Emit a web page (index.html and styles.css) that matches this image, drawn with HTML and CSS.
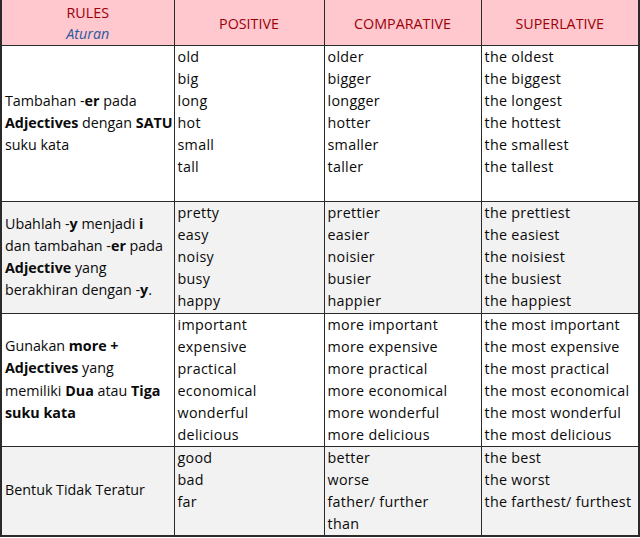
FILE: index.html
```html
<!DOCTYPE html>
<html>
<head>
<meta charset="utf-8">
<link rel="stylesheet" href="styles.css">
</head>
<body>
<table class="grid">
  <colgroup>
    <col class="c-rule"><col class="c-pos"><col class="c-comp"><col class="c-sup">
  </colgroup>
  <thead>
    <tr class="head">
      <th class="rule-head"><span class="rules">RULES</span><span class="aturan">Aturan</span></th>
      <th>POSITIVE</th>
      <th>COMPARATIVE</th>
      <th>SUPERLATIVE</th>
    </tr>
  </thead>
  <tbody>
    <tr class="r1">
      <td class="rule">Tambahan -<b>er</b> pada<br><b>Adjectives</b> dengan <b>SATU</b><br>suku kata</td>
      <td class="words">old<br>big<br>long<br>hot<br>small<br>tall</td>
      <td class="words">older<br>bigger<br>longger<br>hotter<br>smaller<br>taller</td>
      <td class="words">the oldest<br>the biggest<br>the longest<br>the hottest<br>the smallest<br>the tallest</td>
    </tr>
    <tr class="r2 shade">
      <td class="rule">Ubahlah -<b>y</b> menjadi <b>i</b><br>dan tambahan -<b>er</b> pada<br><b>Adjective</b> yang<br>berakhiran dengan -<b>y</b>.</td>
      <td class="words">pretty<br>easy<br>noisy<br>busy<br>happy</td>
      <td class="words">prettier<br>easier<br>noisier<br>busier<br>happier</td>
      <td class="words">the prettiest<br>the easiest<br>the noisiest<br>the busiest<br>the happiest</td>
    </tr>
    <tr class="r3">
      <td class="rule">Gunakan <b>more +</b><br><b>Adjectives</b> yang<br>memiliki <b>Dua</b> atau <b>Tiga</b><br><b>suku kata</b></td>
      <td class="words">important<br>expensive<br>practical<br>economical<br>wonderful<br>delicious</td>
      <td class="words">more important<br>more expensive<br>more practical<br>more economical<br>more wonderful<br>more delicious</td>
      <td class="words">the most important<br>the most expensive<br>the most practical<br>the most economical<br>the most wonderful<br>the most delicious</td>
    </tr>
    <tr class="r4 shade">
      <td class="rule">Bentuk Tidak Teratur</td>
      <td class="words">good<br>bad<br>far</td>
      <td class="words">better<br>worse<br>father/ further<br>than</td>
      <td class="words">the best<br>the worst<br>the farthest/ furthest</td>
    </tr>
  </tbody>
</table>
</body>
</html>
```

FILE: styles.css
```css
html, body {
  margin: 0;
  padding: 0;
  background: #ffffff;
}
body {
  font-family: "Open Sans", "Liberation Sans", sans-serif;
  font-size: 14.3px;
  color: #0a0a0a;
}
.grid {
  border-collapse: collapse;
  table-layout: fixed;
  width: 638px;
}
.c-rule { width: 173px; }
.c-pos { width: 150px; }
.c-comp { width: 157px; }
.c-sup { width: 158px; }
.grid td, .grid th {
  border: 1px solid #2a2a2a;
  padding: 0 0 0 3px;
  white-space: nowrap;
  overflow: hidden;
}
.grid thead th {
  border-top: none;
}
.head {
  height: 45px;
  background: #ffc7ce;
}
.head th {
  font-weight: normal;
  color: #9c0006;
  text-align: center;
  vertical-align: middle;
  padding: 2px 0 0 0;
}
.rule-head .rules,
.rule-head .aturan {
  display: block;
  line-height: 21px;
}
.rule-head .aturan {
  font-style: italic;
  color: #2a5aa0;
}
.words {
  vertical-align: top;
  line-height: 22px;
  padding-top: 1px;
  letter-spacing: 0.3px;
}
.rule {
  vertical-align: middle;
  line-height: 22.2px;
}
.r1 { height: 156px; }
.r2 { height: 112px; }
.r3 { height: 133px; }
.r4 { height: 89px; }
.shade { background: #f2f2f2; }
.grid tbody tr:last-child td {
  border-bottom: 2px solid #2a2a2a;
}
.grid td:first-child, .grid th:first-child {
  border-left: 2px solid #2a2a2a;
}
.grid td:last-child, .grid th:last-child {
  border-right: 2px solid #2a2a2a;
}
```
